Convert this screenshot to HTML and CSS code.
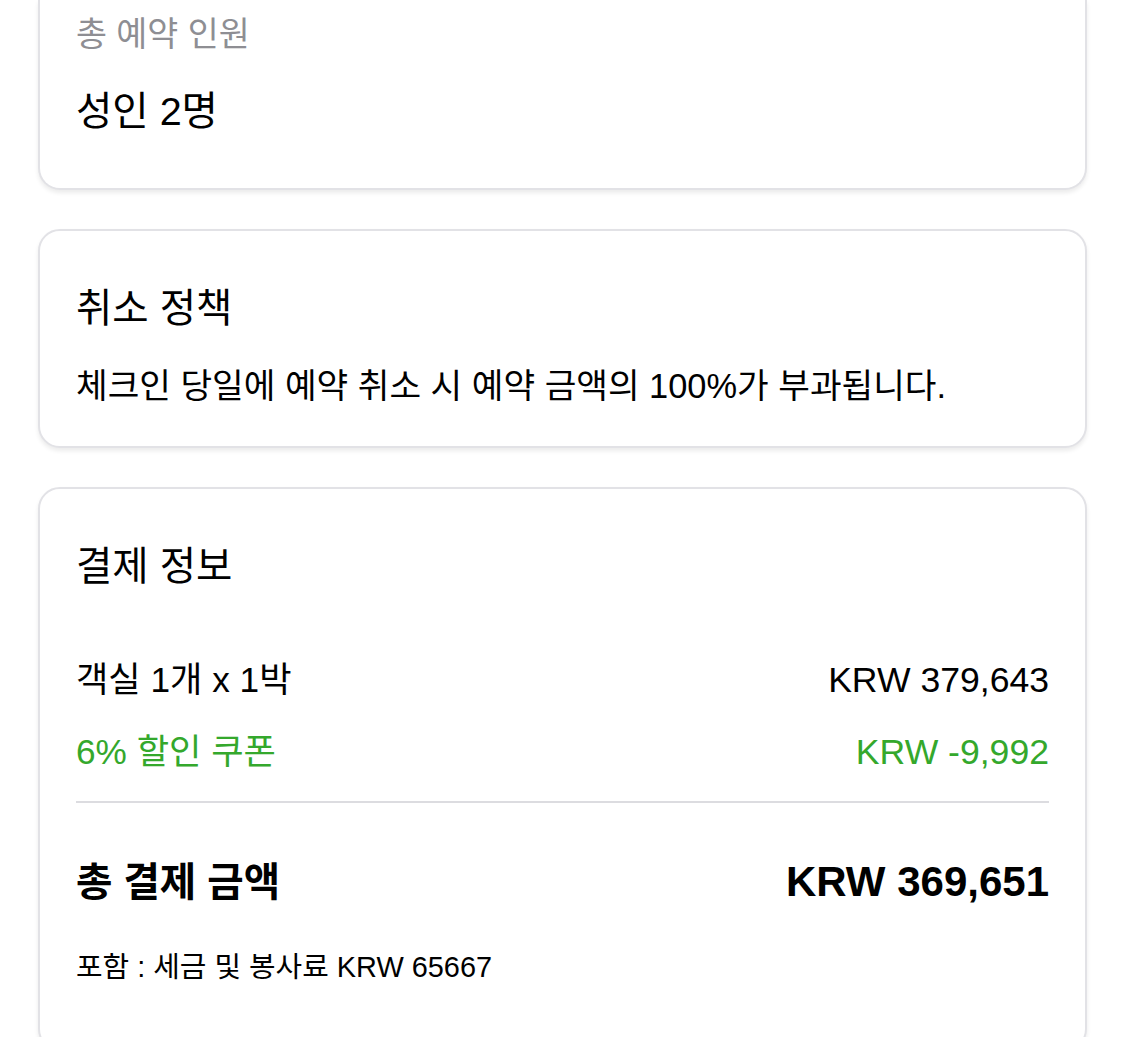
FILE: index.html
```html
<!DOCTYPE html>
<html lang="ko">
<head>
<meta charset="utf-8">
<title>예약 정보</title>
<link rel="stylesheet" href="styles.css">
</head>
<body>
<main class="page">
  <section class="card card--cut">
    <p class="label">총 예약 인원</p>
    <p class="value">성인 2명</p>
  </section>

  <section class="card card--policy">
    <h2 class="title">취소 정책</h2>
    <p class="body">체크인 당일에 예약 취소 시 예약 금액의 100%가 부과됩니다.</p>
  </section>

  <section class="card card--pay">
    <h2 class="title">결제 정보</h2>
    <div class="rows">
      <div class="row">
        <span>객실 1개 x 1박</span>
        <span class="amount">KRW 379,643</span>
      </div>
      <div class="row row--discount">
        <span>6% 할인 쿠폰</span>
        <span class="amount">KRW -9,992</span>
      </div>
    </div>
    <hr class="divider">
    <div class="row row--total">
      <span>총 결제 금액</span>
      <span class="amount">KRW 369,651</span>
    </div>
    <p class="note">포함 : 세금 및 봉사료 KRW 65667</p>
  </section>
</main>
</body>
</html>
```

FILE: styles.css
```css
* { box-sizing: border-box; }

html, body {
  margin: 0;
  padding: 0;
  background: #ffffff;
}

body {
  font-family: "Liberation Sans", "Noto Sans CJK KR", sans-serif;
  color: #000000;
  overflow: hidden;
}

.page {
  display: flex;
  flex-direction: column;
  gap: 39px;
  padding: 0 38px;
}

.card {
  background: #ffffff;
  border: 2px solid #e2e2e6;
  border-radius: 22px;
  box-shadow: 0 3px 4px rgba(0, 0, 0, 0.08);
  padding: 0 36px;
}

.card--cut {
  border-top: 0;
  border-top-left-radius: 0;
  border-top-right-radius: 0;
  padding-top: 12px;
  padding-bottom: 55px;
}

.label {
  margin: 0;
  font-size: 33.7px;
  line-height: 44px;
  color: #8e8e93;
}

.value {
  margin: 33px 0 0;
  font-size: 39.5px;
  line-height: 44px;
}

.card--policy {
  padding-top: 55px;
  padding-bottom: 38px;
}

.title {
  margin: 0;
  font-size: 39.5px;
  font-weight: 400;
  line-height: 44px;
}

.body {
  margin: 34px 0 0;
  font-size: 34.4px;
  line-height: 44px;
}

.card--pay {
  padding-top: 55px;
  padding-bottom: 60px;
}

.rows {
  margin-top: 70px;
  display: flex;
  flex-direction: column;
  gap: 28px;
}

.row {
  display: flex;
  justify-content: space-between;
  align-items: center;
  font-size: 35.2px;
  line-height: 44px;
}

.row .amount {
  font-size: 35.6px;
}

.row--discount {
  color: #34a82c;
}

.divider {
  margin: 27px 0 0;
  border: 0;
  height: 2px;
  background: #dcdce0;
}

.row--total {
  margin-top: 57px;
  font-size: 39.6px;
  font-weight: 700;
  line-height: 44px;
}

.row--total .amount {
  font-size: 42px;
}

.note {
  margin: 41px 0 0;
  font-size: 28.9px;
  line-height: 44px;
}
```
